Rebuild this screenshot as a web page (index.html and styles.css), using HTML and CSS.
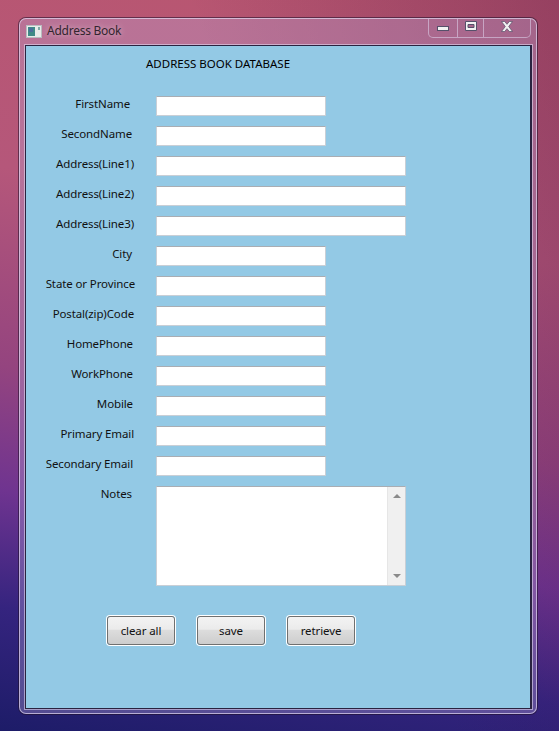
FILE: index.html
```html
<!DOCTYPE html>
<html lang="en">
<head>
  <meta charset="UTF-8">
  <title>Address Book</title>
  <link rel="stylesheet" href="styles.css">
</head>
<body>

  <div class="window">
    <div class="titlebar">
      <svg class="app-icon" width="16" height="13" viewBox="0 0 16 13">
        <rect x="0.5" y="0.5" width="15" height="12" fill="#e8ecea" stroke="#b9bcc0"/>
        <rect x="2" y="2" width="7" height="9" fill="#3f8a86"/>
        <rect x="3" y="3" width="4" height="4" fill="#4a6f9a"/>
        <rect x="12" y="2" width="2" height="3" fill="#7fa8a6"/>
      </svg>
      <span class="title">Address Book</span>
      <div class="controls">
        <div class="control ctl-min">
          <svg width="12" height="5" viewBox="0 0 12 5"><rect x="0.5" y="0.5" width="11" height="4" fill="#f2f2f2" stroke="#56506a"/></svg>
        </div>
        <div class="control ctl-max">
          <svg width="12" height="10" viewBox="0 0 12 10"><path d="M0.5 0.5h11v9h-11z M3 3.5v3h6v-3z" fill="#f2f2f2" fill-rule="evenodd" stroke="#56506a"/></svg>
        </div>
        <div class="control ctl-close">
          <svg width="12" height="11" viewBox="0 0 12 11"><path d="M0.5 0.5h3.2l2.3 2.8 2.3-2.8h3.2l-3.8 5 3.8 5h-3.2l-2.3-2.8-2.3 2.8h-3.2l3.8-5z" fill="#f2f2f2" stroke="#56506a" stroke-width="0.7"/></svg>
        </div>
      </div>
    </div>

    <div class="client">
      <h1 class="heading">ADDRESS BOOK DATABASE</h1>

      <form class="form">
        <label class="inset-4">FirstName</label>
        <input class="short" type="text">
        <label class="inset-2">SecondName</label>
        <input class="short" type="text">
        <label>Address(Line1)</label>
        <input class="long" type="text">
        <label>Address(Line2)</label>
        <input class="long" type="text">
        <label>Address(Line3)</label>
        <input class="long" type="text">
        <label class="inset-2">City</label>
        <input class="short" type="text">
        <label class="outset-1">State or Province</label>
        <input class="short" type="text">
        <label>Postal(zip)Code</label>
        <input class="short" type="text">
        <label class="inset-1">HomePhone</label>
        <input class="short" type="text">
        <label class="inset-1">WorkPhone</label>
        <input class="short" type="text">
        <label class="inset-1">Mobile</label>
        <input class="short" type="text">
        <label>Primary Email</label>
        <input class="short" type="text">
        <label class="inset-1">Secondary Email</label>
        <input class="short" type="text">
        <label class="inset-2">Notes</label>
        <div class="notes">
          <textarea></textarea>
          <div class="scrollbar">
            <span class="arrow-up"></span>
            <span class="arrow-down"></span>
          </div>
        </div>
      </form>

      <div class="buttons">
        <button type="button">clear all</button>
        <button type="button">save</button>
        <button type="button">retrieve</button>
      </div>
    </div>
  </div>

</body>
</html>
```

FILE: styles.css
```css
html, body {
  height: 100%;
}

body {
  margin: 0;
  box-sizing: border-box;
  padding: 18px 22px 17px 19px;
  background:
    linear-gradient(250deg, rgba(60, 10, 60, 0.28) 0%, rgba(60, 10, 60, 0) 45%),
    linear-gradient(190deg, #b9566f 0%, #b5577a 32%, #94447f 56%, #6f3490 71%, #35247f 85%, #1d1c68 100%);
  font-family: "Noto Sans", "Liberation Sans", sans-serif;
  font-size: 11.5px;
  color: #111;
  overflow: hidden;
}

.window {
  height: 100%;
  box-sizing: border-box;
  display: flex;
  flex-direction: column;
  padding: 0 4px 4px 5px;
  background: rgba(190, 175, 225, 0.32);
  border: 1px solid rgba(225, 215, 240, 0.7);
  border-radius: 7px;
  box-shadow: 0 0 0 1px rgba(30, 15, 40, 0.55);
}

.titlebar {
  height: 26px;
  flex: none;
  display: flex;
  align-items: flex-start;
}

.app-icon {
  margin-top: 6px;
  margin-left: 1px;
}

.title {
  margin-left: 5px;
  margin-top: 3px;
  line-height: 18px;
  font-size: 12px;
  letter-spacing: -0.25px;
  color: #33252f;
  text-shadow: 0 0 6px rgba(255, 255, 255, 0.55);
}

.controls {
  margin-left: auto;
  margin-right: 1px;
  display: flex;
  height: 18px;
  border: 1px solid rgba(225, 215, 240, 0.55);
  border-top: none;
  border-radius: 0 0 5px 5px;
}

.control {
  display: flex;
  justify-content: center;
  padding-top: 2px;
  box-sizing: border-box;
}

.control + .control {
  border-left: 1px solid rgba(225, 215, 240, 0.55);
}

.ctl-min {
  width: 28px;
  padding-top: 7px;
}

.ctl-max {
  width: 26px;
}

.ctl-close {
  width: 47px;
}

.client {
  flex: 1;
  background: #93c9e5;
  border: 1px solid #2a2340;
  border-right-width: 2px;
  box-shadow: 0 0 0 1px rgba(225, 215, 240, 0.6);
}

.heading {
  margin: 0;
  padding: 9px 0 0 120px;
  font-size: 11.5px;
  font-weight: normal;
  line-height: 18px;
  color: #000;
}

.form {
  margin-top: 23px;
  display: grid;
  grid-template-columns: 108px auto;
  column-gap: 22px;
  row-gap: 10px;
  justify-content: start;
  justify-items: start;
}

.form label {
  justify-self: end;
  white-space: nowrap;
  line-height: 16px;
  letter-spacing: -0.12px;
}

.form label.inset-1 { margin-right: 1px; }
.form label.inset-2 { margin-right: 2px; }
.form label.inset-4 { margin-right: 4px; }
.form label.outset-1 { margin-right: -1px; }

.form input,
.notes {
  box-sizing: border-box;
  background: #fff;
  border: 1px solid #c9cfd6;
  border-top-color: #a9adb3;
}

.form input {
  height: 20px;
  padding: 0 2px;
  outline: none;
}

.short {
  width: 170px;
}

.long {
  width: 250px;
}

.notes {
  width: 250px;
  height: 100px;
  display: flex;
}

.notes textarea {
  flex: 1;
  min-width: 0;
  border: none;
  outline: none;
  resize: none;
  padding: 2px;
  background: #fff;
}

.scrollbar {
  width: 18px;
  flex: none;
  display: flex;
  flex-direction: column;
  justify-content: space-between;
  align-items: center;
  box-sizing: border-box;
  padding: 7px 0;
  background: #f0f0f0;
  border-left: 1px solid #e6e6e6;
}

.arrow-up {
  border-left: 4px solid transparent;
  border-right: 4px solid transparent;
  border-bottom: 4px solid #8a8a8a;
}

.arrow-down {
  border-left: 4px solid transparent;
  border-right: 4px solid transparent;
  border-top: 4px solid #8a8a8a;
}

.buttons {
  margin: 30px 0 0 81px;
  display: flex;
  gap: 22px;
}

.buttons button {
  width: 68px;
  height: 29px;
  padding: 0 0 1px;
  font-family: inherit;
  font-size: 11.5px;
  letter-spacing: -0.1px;
  color: #111;
  background: linear-gradient(#f3f3f3 0%, #ebebeb 45%, #dcdcdc 50%, #cdcdcd 100%);
  border: 1px solid #707070;
  border-radius: 3px;
  box-shadow: 0 0 0 1px #fff;
}
```
